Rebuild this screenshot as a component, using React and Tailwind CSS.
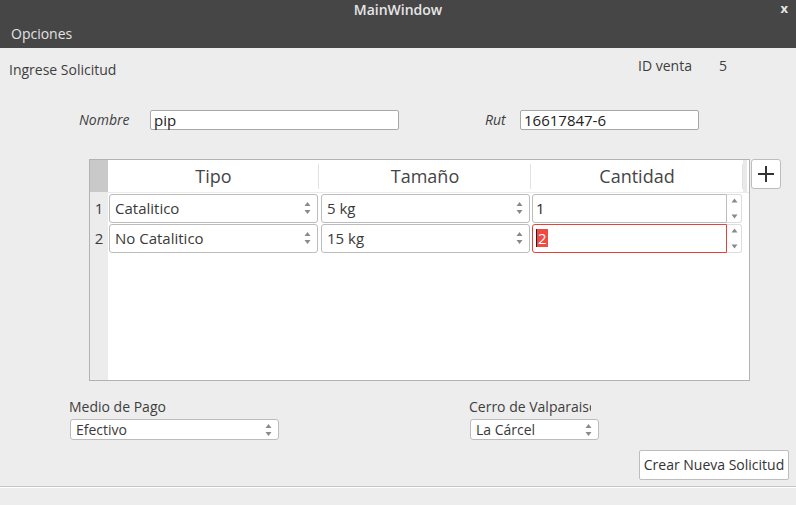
import React from 'react';

const font = { fontFamily: '"Open Sans", "DejaVu Sans", sans-serif' };

function Arrows({ className = '' }) {
  return (
    <svg width="7" height="14" viewBox="0 0 7 14" className={className}>
      <path d="M3.5 1 L6.5 5 L0.5 5 Z" fill="#8a8a8a" />
      <path d="M0.5 9 L6.5 9 L3.5 13 Z" fill="#8a8a8a" />
    </svg>
  );
}

function Combo({ value, className = '', textClass = 'text-[15px]' }) {
  return (
    <div className={`flex items-center justify-between bg-white border border-[#bcbcbc] rounded-[3px] pl-[5px] pr-[6px] text-[#3a3a3a] ${className}`}>
      <span className={`${textClass} leading-none whitespace-nowrap`}>{value}</span>
      <Arrows />
    </div>
  );
}

function SpinBox({ value, active }) {
  return (
    <div className="flex h-[29px] w-[210px] ml-[2px]">
      <div className={`flex-1 flex items-center bg-white rounded-l-[3px] pl-[3px] border ${active ? 'border-[#e8403a]' : 'border-[#bcbcbc]'}`}>
        {active ? (
          <span className="flex items-center">
            <span className="w-[1px] h-[18px] bg-[#222]" />
            <span className="bg-[#ef4a43] text-white text-[15px] leading-[18px] px-[1px]">{value}</span>
          </span>
        ) : (
          <span className="text-[15px] leading-none text-[#2a2a2a]">{value}</span>
        )}
      </div>
      <div className="w-[15px] flex flex-col items-center justify-between py-[3px] border border-l-0 border-[#dcdcdc] rounded-r-[3px] bg-white">
        <svg width="7" height="5" viewBox="0 0 7 5"><path d="M3.5 0.5 L6.5 4.5 L0.5 4.5 Z" fill="#8a8a8a" /></svg>
        <svg width="7" height="5" viewBox="0 0 7 5"><path d="M0.5 0.5 L6.5 0.5 L3.5 4.5 Z" fill="#8a8a8a" /></svg>
      </div>
    </div>
  );
}

const rows = [
  { n: 1, tipo: 'Catalitico', tam: '5 kg', cant: '1' },
  { n: 2, tipo: 'No Catalitico', tam: '15 kg', cant: '2', active: true },
];

export default function App() {
  return (
    <div className="w-[796px] h-[505px] flex flex-col bg-[#ededed] overflow-hidden" style={font}>
      {/* title bar */}
      <div className="relative h-[20px] bg-[#464646] flex items-center justify-center">
        <span className="text-[14px] font-semibold text-[#e6e6e6] leading-none">MainWindow</span>
        <span className="absolute right-[8px] top-[2px] text-[13px] font-bold text-[#e6e6e6] leading-none">x</span>
      </div>
      {/* menu bar */}
      <div className="h-[28px] bg-[#464646] flex items-center px-[11px]">
        <span className="text-[14px] text-[#e2e2e2] leading-none">Opciones</span>
      </div>

      {/* content */}
      <div className="flex-1 flex flex-col text-[#3e3e3e]">
        <div className="h-[40px] flex items-start">
          <span className="ml-[9px] mt-[13px] text-[14px] leading-[18px]">Ingrese Solicitud</span>
          <span className="ml-auto mt-[9px] text-[14px] leading-[18px]">ID venta</span>
          <span className="ml-[27px] mr-[69px] mt-[9px] text-[14px] leading-[18px]">5</span>
        </div>

        <div className="mt-[22px] h-[20px] flex items-center">
          <span className="ml-[79px] w-[71px] italic text-[14px] leading-none">Nombre</span>
          <div className="w-[249px] h-[20px] bg-white border border-[#a8a8a8] rounded-[2px] flex items-center pl-[3px] text-[15px] text-[#222]">pip</div>
          <span className="ml-[86px] w-[35px] italic text-[14px] leading-none">Rut</span>
          <div className="w-[179px] h-[20px] bg-white border border-[#a8a8a8] rounded-[2px] flex items-center pl-[3px] text-[15px] text-[#222]">16617847-6</div>
        </div>

        <div className="mt-[29px] ml-[89px] flex items-start">
          {/* table */}
          <div className="w-[661px] h-[222px] border border-[#b2b2b2] bg-white flex flex-col">
            <div className="h-[33px] flex border-b border-[#ececec]">
              <div className="w-[18px] bg-[#c9c9c9]" />
              {['Tipo', 'Tamaño', 'Cantidad'].map((h, i) => (
                <div key={h} className={`${i === 0 ? 'w-[211px]' : 'w-[212px]'} flex items-center justify-center relative`}>
                  <span className="text-[18px] text-[#454545] leading-none">{h}</span>
                  <span className="absolute right-0 top-[4px] bottom-[3px] w-[1px] bg-[#e2e2e2]" />
                </div>
              ))}
              <div className="w-[4px] bg-[#e9e9e9]" />
            </div>
            <div className="flex-1 flex">
              <div className="w-[18px] bg-[#ececec] flex flex-col">
                {rows.map(r => (
                  <div key={r.n} className="h-[30px] flex items-center justify-center text-[15px] text-[#3a3a3a]">{r.n}</div>
                ))}
              </div>
              <div className="flex-1 flex flex-col">
                {rows.map(r => (
                  <div key={r.n} className="h-[30px] flex items-center">
                    <Combo value={r.tipo} className="w-[209px] h-[29px] ml-[1px]" />
                    <Combo value={r.tam} className="w-[209px] h-[29px] ml-[3px]" />
                    <SpinBox value={r.cant} active={r.active} />
                  </div>
                ))}
              </div>
            </div>
          </div>
          <button className="ml-[1px] w-[30px] h-[30px] bg-white border border-[#bdbdbd] rounded-[3px] flex items-center justify-center">
            <svg width="18" height="18" viewBox="0 0 18 18"><path d="M9 1 V17 M1 9 H17" stroke="#333" strokeWidth="2" /></svg>
          </button>
        </div>

        <div className="mt-[17px] flex">
          <span className="ml-[69px] w-[400px] text-[14px] leading-[18px]">Medio de Pago</span>
          <span className="w-[122px] overflow-hidden whitespace-nowrap text-[14px] leading-[18px]">Cerro de Valparaiso</span>
        </div>
        <div className="mt-[3px] flex">
          <Combo value="Efectivo" textClass="text-[14px]" className="ml-[70px] w-[209px] h-[21px]" />
          <Combo value="La Cárcel" textClass="text-[14px]" className="ml-[191px] w-[129px] h-[21px]" />
        </div>
        <div className="mt-[10px] flex justify-end pr-[7px]">
          <button className="w-[150px] h-[30px] bg-white border border-[#bdbdbd] rounded-[2px] text-[14px] text-[#333] leading-none">Crear Nueva Solicitud</button>
        </div>
        <div className="mt-[6px] h-[1px] bg-[#c6c6c6]" />
        <div className="h-[1px] bg-white" />
        <div className="flex-1" />
      </div>
    </div>
  );
}
